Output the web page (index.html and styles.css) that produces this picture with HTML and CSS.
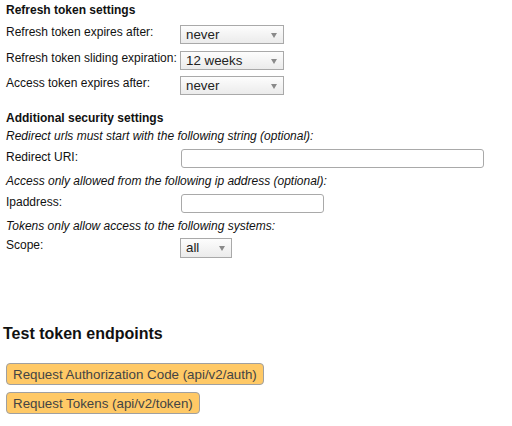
FILE: index.html
```html
<!DOCTYPE html>
<html>
    <head>
        <meta charset="UTF-8">
        <title>Token settings</title>
        <link rel="stylesheet" href="styles.css">
    </head>
    <body>
        <div class="settings">
            <h4>Refresh token settings</h4>
            <div class="row">
                <label>Refresh token expires after:</label>
                <span class="pick wide"><select><option>never</option></select></span>
            </div>
            <div class="row">
                <label>Refresh token sliding expiration:</label>
                <span class="pick wide"><select><option>12 weeks</option></select></span>
            </div>
            <div class="row">
                <label>Access token expires after:</label>
                <span class="pick wide"><select><option>never</option></select></span>
            </div>

            <h4 class="next">Additional security settings</h4>
            <p class="hint">Redirect urls must start with the following string (optional):</p>
            <div class="row field">
                <label>Redirect URI:</label>
                <input type="text" class="long">
            </div>
            <p class="hint">Access only allowed from the following ip address (optional):</p>
            <div class="row field">
                <label>Ipaddress:</label>
                <input type="text" class="short">
            </div>
            <p class="hint">Tokens only allow access to the following systems:</p>
            <div class="row">
                <label>Scope:</label>
                <span class="pick small"><select><option>all</option></select></span>
            </div>
        </div>

        <div class="endpoints">
            <h3>Test token endpoints</h3>
            <div class="buttons">
                <button>Request Authorization Code (api/v2/auth)</button>
                <button>Request Tokens (api/v2/token)</button>
            </div>
        </div>
    </body>
</html>
```
FILE: styles.css
```css
* {
    box-sizing: border-box;
}

body {
    margin: 0;
    font-family: "Liberation Sans", Arial, sans-serif;
    font-size: 12px;
    line-height: 14px;
    color: #111;
    background: white;
}

.settings {
    padding: 3px 6px 0 6px;
}

h4 {
    margin: 0 0 8px 0;
    font-size: 12px;
    font-weight: bold;
}

h4.next {
    margin-top: 9px;
    margin-bottom: 4px;
}

.row {
    display: grid;
    grid-template-columns: 174px auto;
    align-items: start;
    height: 25.5px;
}

.row label {
    white-space: nowrap;
}

.row.field {
    height: 26px;
}

.row.field label {
    padding-top: 2px;
}

.hint {
    margin: 0 0 5px 0;
    font-style: italic;
}

.pick {
    position: relative;
    display: inline-block;
}

.pick select {
    -webkit-appearance: none;
    appearance: none;
    width: 100%;
    height: 19px;
    padding: 0 0 0 5px;
    border: 1px solid #a9a9a9;
    border-radius: 0;
    background: linear-gradient(#fdfdfd, #ebebeb);
    font-family: inherit;
    font-size: 13.33px;
    color: #222;
}

.pick::after {
    content: "";
    position: absolute;
    right: 7px;
    top: 8px;
    border-left: 3.5px solid transparent;
    border-right: 3.5px solid transparent;
    border-top: 5px solid #8a8a8a;
    pointer-events: none;
}

.wide {
    width: 104px;
}

.small {
    width: 52px;
}

.small select {
    height: 20px;
}

input {
    height: 19px;
    margin: 1px 0 0 1px;
    border: 1px solid #a9a9a9;
    border-radius: 3px;
    font-family: inherit;
    font-size: 13.33px;
}

.long {
    width: 303px;
}

.short {
    width: 143px;
}

.endpoints {
    padding: 0 3px;
    margin-top: 62px;
}

h3 {
    margin: 0 0 20px 0;
    font-size: 16px;
    line-height: 18px;
    font-weight: bold;
}

.buttons {
    display: flex;
    flex-direction: column;
    align-items: flex-start;
    gap: 7px;
    padding-left: 3px;
}

button {
    height: 22px;
    padding: 0 6px;
    border: 1px solid #a0a0a0;
    border-radius: 4px;
    background: #ffc966;
    color: #444;
    font-family: inherit;
    font-size: 13.33px;
}
```
